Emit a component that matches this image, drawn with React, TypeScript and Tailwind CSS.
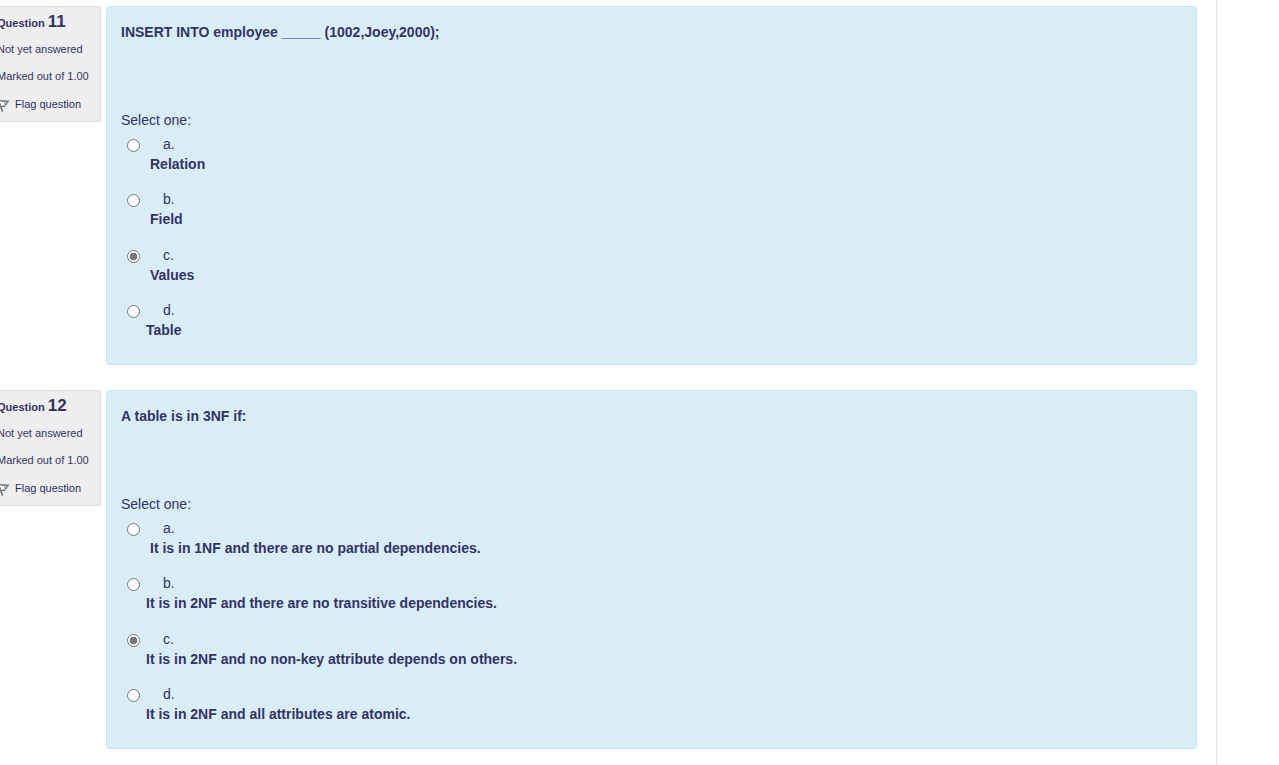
import { useState } from "react";

type Option = { letter: string; text: string; indent: "wide" | "narrow" };
type Question = { number: number; prompt: string; chosen: string; options: Option[] };

const questions: Question[] = [
  {
    number: 11,
    prompt: "INSERT INTO employee _____ (1002,Joey,2000);",
    chosen: "c",
    options: [
      { letter: "a", text: "Relation", indent: "wide" },
      { letter: "b", text: "Field", indent: "wide" },
      { letter: "c", text: "Values", indent: "wide" },
      { letter: "d", text: "Table", indent: "narrow" },
    ],
  },
  {
    number: 12,
    prompt: "A table is in 3NF if:",
    chosen: "c",
    options: [
      { letter: "a", text: "It is in 1NF and there are no partial dependencies.", indent: "wide" },
      { letter: "b", text: "It is in 2NF and there are no transitive dependencies.", indent: "narrow" },
      { letter: "c", text: "It is in 2NF and no non-key attribute depends on others.", indent: "narrow" },
      { letter: "d", text: "It is in 2NF and all attributes are atomic.", indent: "narrow" },
    ],
  },
];

function FlagIcon() {
  return (
    <svg className="h-4 w-4 shrink-0" viewBox="0 0 16 16" fill="none" stroke="#777" strokeWidth="1.4" aria-hidden="true">
      <path d="M5 4.6 L15.2 5.2 L11.4 10.2 L7.6 10.4 Z" fill="#f4f4f4" />
      <path d="M5 3.6 L9.6 15.6" strokeWidth="1.6" />
      <path d="M10.8 5.4 L12.6 8.4" strokeWidth="1" />
    </svg>
  );
}

function QuestionInfo({ number }: { number: number }) {
  return (
    <aside className="-ml-3 w-[113px] shrink-0 rounded-xs border border-[#dcdcdc] bg-[#eeeeee] pb-2 pl-2 text-[11px] leading-4 whitespace-nowrap">
      <h3 className="h-[34px] pt-[5px] font-bold leading-5">
        Question <span className="text-[17px] leading-5">{number}</span>
      </h3>
      <p className="h-[27px]">Not yet answered</p>
      <p className="h-[28px]">Marked out of 1.00</p>
      <a href="#flag" className="-ml-1 flex items-center gap-1.5 pb-px text-[#2a2f66]">
        <FlagIcon />
        Flag question
      </a>
    </aside>
  );
}

function QuestionBlock({ question }: { question: Question }) {
  const [chosen, setChosen] = useState(question.chosen);
  const group = `question-${question.number}`;
  return (
    <section className="flex items-start gap-[5px]">
      <QuestionInfo number={question.number} />
      <div className="min-w-0 flex-1 rounded-[4px] border border-[#bce8f1] bg-[#d9edf7] px-3.5 pt-[15px] pb-6 text-sm leading-5">
        <p className="font-bold">{question.prompt}</p>
        <fieldset className="mt-[68px]">
          <legend>Select one:</legend>
          <div className="mt-1 flex min-h-[206px] flex-col justify-between">
            {question.options.map((option) => (
              <div key={option.letter} className="flex items-start pl-1.5">
                <input
                  type="radio"
                  id={`${group}-${option.letter}`}
                  name={group}
                  checked={chosen === option.letter}
                  onChange={() => setChosen(option.letter)}
                  className="mt-[5px] h-[13px] w-[13px] shrink-0 appearance-none rounded-full border border-[#767676] bg-white checked:bg-[radial-gradient(circle_closest-side,#767676_64%,#ffffff_76%)]"
                />
                <label htmlFor={`${group}-${option.letter}`} className="block">
                  <span className="block pl-[23px]">{option.letter}.</span>
                  <span className={option.indent === "wide" ? "block pl-2.5 font-bold" : "block pl-1.5 font-bold"}>
                    {option.text}
                  </span>
                </label>
              </div>
            ))}
          </div>
        </fieldset>
      </div>
    </section>
  );
}

export default function App() {
  return (
    <div className="min-h-screen overflow-x-hidden bg-white pr-[62px] font-['Liberation_Sans',Arial,sans-serif] text-[#333366]">
      <main className="flex min-h-screen flex-col gap-[25px] border-r border-[#e5e5e5] pt-1.5 pr-[19px]">
        {questions.map((question) => (
          <QuestionBlock key={question.number} question={question} />
        ))}
      </main>
    </div>
  );
}
